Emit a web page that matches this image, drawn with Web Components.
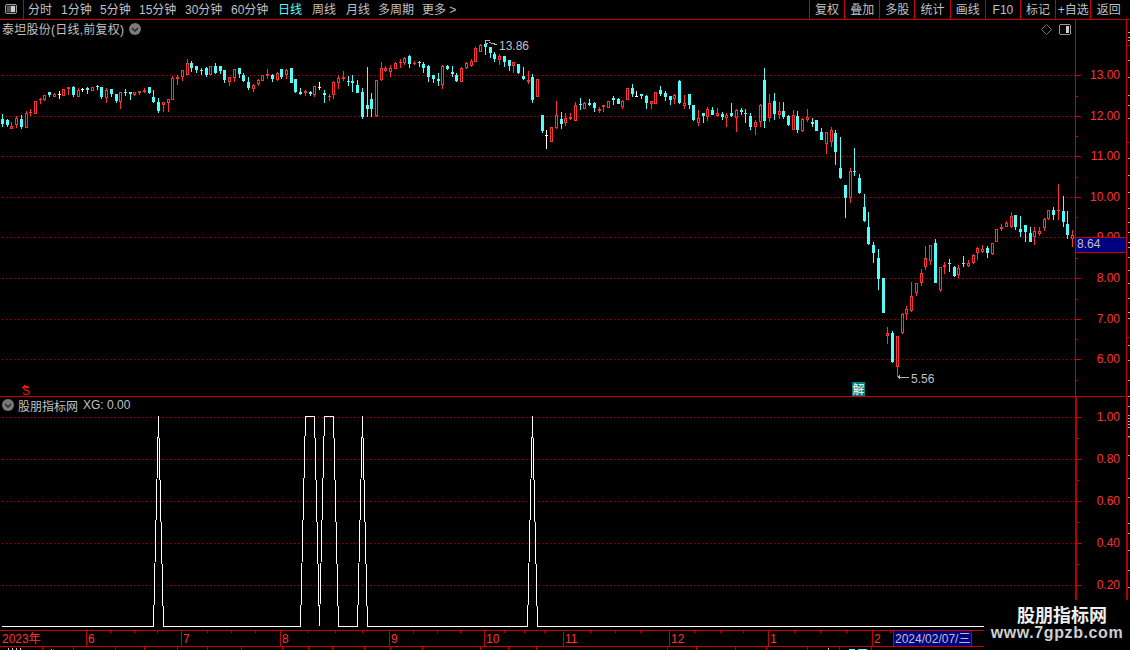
<!DOCTYPE html>
<html lang="zh">
<head>
<meta charset="utf-8">
<title>泰坦股份</title>
<style>
  html, body { margin: 0; background: #000; }
  body { width: 1130px; height: 650px; overflow: hidden; }
</style>
</head>
<body>
<stock-app>
  <stock-toolbar></stock-toolbar>
  <kline-panel></kline-panel>
  <indicator-panel></indicator-panel>
  <date-axis></date-axis>
  <status-strip></status-strip>
  <site-mark></site-mark>
</stock-app>

<script>
const RED = '#ff3232', LINE = '#c80000', CYAN = '#54fcfc', GRAY = '#c0c0c0';
const FONT = `"Liberation Sans", "Noto Sans CJK SC", sans-serif`;

// small helpers to write svg markup
const vline = (x, y1, y2, c = LINE, w = 1) => `<rect x="${x}" y="${y1}" width="${w}" height="${y2 - y1}" fill="${c}"/>`;
const hline = (x1, x2, y, c = LINE) => `<rect x="${x1}" y="${y}" width="${x2 - x1}" height="1" fill="${c}"/>`;
const label = (x, y, t, c = RED, anchor = 'start') => `<text x="${x}" y="${y}" fill="${c}" text-anchor="${anchor}">${t}</text>`;
// dotted grid line: one pixel on, three off (a dash array aliases under crispEdges)
const dots = (x2, y) => {
  let d = '';
  for (let x = 2; x < x2; x += 4) d += `M${x} ${y}h1v1h-1z`;
  return `<path d="${d}" fill="#b40000"/>`;
};
const chevron = (cx, cy) => `<circle cx="${cx}" cy="${cy}" r="6" fill="#7a7a7a"/><path d="M${cx - 3} ${cy - 1}l3 3 3-3" fill="none" stroke="#222" stroke-width="1.4"/>`;

class StockApp extends HTMLElement {
  constructor() {
    super();
    this.attachShadow({ mode: 'open' }).innerHTML = `
      <style>
        :host { display: flex; flex-direction: column; position: relative; width: 1130px; height: 650px; overflow: hidden; background: #000; font-family: ${FONT}; }
      </style>
      <slot></slot>`;
  }
}

class StockToolbar extends HTMLElement {
  constructor() {
    super();
    const periods = [['分时', 33], ['1分钟', 39], ['5分钟', 39], ['15分钟', 46], ['30分钟', 46], ['60分钟', 47], ['日线', 34, 'on'], ['周线', 34], ['月线', 32], ['多周期', 44], ['更多 &gt;', 40]];
    const tools = ['复权', '叠加', '多股', '统计', '画线', 'F10', '标记', '+自选', '返回'];
    this.attachShadow({ mode: 'open' }).innerHTML = `
      <style>
        :host { display: flex; box-sizing: border-box; height: 20px; border-bottom: 1px solid ${LINE}; color: ${GRAY}; font-size: 12px; line-height: 21px; white-space: nowrap; }
        .toggle { width: 23px; border-right: 1px solid ${LINE}; display: flex; align-items: center; justify-content: center; margin-right: 4px; }
        .periods { display: flex; flex: 1; }
        .periods span { display: block; }
        .on { color: ${CYAN}; }
        .tools { display: flex; }
        .tools span { width: 34.2px; border-left: 1px solid ${LINE}; text-align: center; }
        .tools span:last-child { width: 39.6px; padding-right: 4px; box-sizing: border-box; }
      </style>
      <div class="toggle">
        <svg width="13" height="11" viewBox="0 0 13 11" shape-rendering="crispEdges">
          <rect x=".5" y=".5" width="11" height="9" rx="2" fill="#222" stroke="#999"/>
          <rect x="2" y="2" width="4" height="6" fill="#555"/><rect x="6" y="2" width="4" height="6" fill="#ccc"/>
        </svg>
      </div>
      <div class="periods">${periods.map(([t, w, c]) => `<span class="${c || ''}" style="width:${w}px">${t}</span>`).join('')}</div>
      <div class="tools">${tools.map(t => `<span>${t}</span>`).join('')}</div>`;
  }
}

// candles read off the reference: [x, type, wickTop, wickBottom, bodyTop, bodyBottom] in 3x crop pixels
const SECTIONS = [
  { ox: 0, oy: 50, rows: [
    [7,'c',193,230,207,222],[22,'c',207,232,210,226],[34,'r',216,238,228,236],[49,'r',198,235,205,224],[64,'c',195,236,207,232],
    [79,'r',184,234,190,234],[91,'r',178,198,186,190],[106,'r',154,191,154,191],[121,'r',145,161,147,149],[133,'r',135,152,136,149],
    [148,'c',126,140,126,135],[163,'r',130,141,132,140],[178,'w',124,147,133,134],[190,'r',118,137,118,137],[205,'r',112,135,112,117],
    [220,'c',108,140,111,135],[235,'r',114,140,121,140],[247,'w',114,125,118,119],[262,'c',111,131,114,120],[277,'r',111,122,111,122],
    [292,'c',105,119,109,111],[304,'c',111,147,111,141],[319,'r',114,159,120,143],[334,'c',117,141,117,131],[349,'c',132,159,132,153],
    [361,'r',126,177,126,155],[376,'c',117,137,127,129],[391,'c',126,150,126,131],[403,'r',125,137,126,134],[418,'r',123,134,123,128],
    [433,'r',114,128,120,126],[448,'c',111,131,111,128],[460,'c',120,159,141,156],[475,'c',144,189,156,183],[490,'r',156,186,156,166],
    [505,'r',147,186,147,158],[517,'r',78,150,84,149],[532,'r',75,105,81,87],[547,'r',60,93,60,80],[562,'r',27,76,39,74],
    [574,'c',33,66,39,54],[589,'c',48,69,48,60],[604,'c',54,76,60,62],[619,'c',51,81,54,75],[631,'r',48,75,48,75],
    [646,'c',39,72,48,69],[661,'c',48,72,48,63],[673,'c',60,99,60,90],[688,'r',81,108,81,95],[703,'r',57,96,57,84]
  ] },
  { ox: 0, oy: 0, rows: [
    [718,'c',204,235,204,222],[730,'c',220,245,226,243],[745,'c',232,270,246,265],[760,'r',252,276,256,268],[775,'r',238,258,241,253],
    [787,'r',225,243,225,243],[802,'r',208,238,222,227],[817,'c',222,245,226,238],[832,'r',216,243,220,240],[845,'c',208,238,208,232],
    [860,'r',208,238,211,226],[874,'c',204,250,204,248],[887,'c',238,280,238,276],[902,'c',265,285,277,283],[917,'r',270,288,272,278],
    [932,'c',272,288,275,283],[944,'r',258,290,259,285],[958,'w',246,270,262,263],[973,'c',270,310,280,284],[988,'r',282,302,288,290],
    [1000,'r',243,298,247,285],[1015,'r',224,268,235,248],[1030,'r',213,243,231,238],[1045,'c',228,258,243,245],[1057,'c',225,275,242,248],
    [1072,'c',240,280,255,280],[1087,'c',265,358,276,352],[1102,'c',202,350,316,326],[1114,'c',280,350,297,326],[1129,'r',240,350,240,347],
    [1144,'r',186,243,205,240],[1157,'r',198,215,203,212],[1172,'r',195,230,205,215],[1187,'r',186,208,190,206],[1202,'r',178,205,185,190],
    [1214,'r',170,195,175,190],[1229,'c',165,204,168,192],[1244,'r',182,195,190,193],[1259,'c',182,200,186,190],[1271,'c',186,218,192,204],
    [1286,'c',196,245,198,230],[1301,'c',225,250,225,238],[1316,'c',220,258,238,243],[1328,'r',196,268,198,255],[1343,'c',195,210,198,206],
    [1358,'c',198,232,215,222],[1370,'c',218,246,226,244],[1385,'r',200,246,203,245],[1400,'r',186,208,190,205],[1415,'r',178,200,182,197],
    [1427,'r',140,185,145,185]
  ] },
  { ox: 240, oy: 35, rows: [
    [722,'r',28,52,30,52],[737,'c',15,60,27,37],[751,'c',35,68,37,55],[764,'c',52,82,57,72],[778,'r',58,90,63,74],
    [793,'c',62,95,62,80],[808,'c',75,108,75,92],[820,'r',80,115,82,92],[835,'c',87,118,87,115],[850,'c',96,135,123,132],
    [865,'r',107,147,135,142],[878,'c',118,205,126,195]
  ] },
  { ox: 480, oy: 30, rows: [
    [172,'r',148,200,148,200],[187,'c',255,308,255,303],[199,'w',300,357,316,317],[214,'r',292,336,292,336],[229,'r',213,296,256,294],
    [244,'c',247,297,268,283],[257,'r',250,288,264,278],[271,'r',248,270,262,267],[286,'r',217,273,226,272],[301,'c',205,240,222,224],
    [313,'r',217,238,218,236],[328,'c',208,228,220,225],[343,'c',215,246,219,234],[358,'r',232,250,237,243],[370,'r',225,246,226,232],
    [385,'r',214,234,214,234],[400,'c',198,225,204,210],[415,'c',205,222,207,221],[427,'r',209,236,213,231],[442,'r',175,210,175,210],
    [457,'c',163,200,175,191],[469,'w',184,200,198,199],[484,'c',192,207,192,197],[499,'c',195,236,198,219],[514,'r',214,236,214,221],
    [526,'r',185,222,186,221],[541,'c',168,198,180,192],[556,'c',183,213,189,201],[571,'c',197,225,198,211],[583,'r',193,222,196,208],
    [598,'c',150,222,153,219],[613,'r',195,236,218,227],[628,'c',192,236,192,226],[640,'c',225,272,226,270],[655,'r',240,288,264,278],
    [670,'c',248,278,250,257],[683,'r',230,272,238,262],[697,'c',232,255,239,254],[712,'r',235,260,250,257],[727,'c',245,270,252,262],
    [739,'r',250,292,255,265],[754,'c',220,262,249,258],[769,'r',238,305,240,265],[784,'c',234,256,240,246],[796,'c',238,278,249,251],
    [811,'c',250,300,258,290],[826,'r',270,315,276,290],[841,'r',222,290,226,275],[854,'c',114,295,150,272],[868,'r',192,275,219,265],
    [883,'c',190,270,213,252],[898,'r',215,268,244,256],[910,'c',216,268,243,262],[925,'c',254,288,258,285],[940,'r',240,300,256,299],
    [952,'c',243,308,259,300],[967,'r',264,305,268,304],[982,'r',238,275,262,270],[997,'c',264,292,277,283],[1009,'c',270,303,270,303],
    [1024,'c',294,330,306,330],[1039,'r',306,372,306,343],[1054,'r',290,350,300,335]
  ] },
  { ox: 820, oy: 130, rows: [
    [46,'c',0,105,10,65],[61,'c',20,147,114,145],[76,'c',165,263,165,204],[91,'r',115,218,124,205],[103,'c',55,137,122,125],
    [118,'c',132,192,144,190],[133,'c',192,275,231,273],[145,'c',245,345,291,342],[160,'c',335,398,345,368],[175,'c',357,480,384,446],
    [190,'c',445,548,445,548],[202,'r',592,642,610,617],[217,'c',603,698,608,695],[232,'r',618,740,618,712],[247,'r',550,612,552,610],
    [259,'r',528,570,538,552],[274,'r',456,545,498,542],[289,'r',460,498,460,488],[304,'r',418,468,430,458],[316,'r',348,420,385,410],
    [331,'r',345,405,346,392],[346,'c',328,458,340,458],[361,'r',410,486,412,480],[373,'r',395,432,405,412],[388,'c',388,425,399,401],
    [403,'c',408,440,411,438],[415,'r',405,445,415,434],[430,'c',378,412,399,402],[445,'r',390,410,399,407],[460,'r',372,402,376,398],
    [472,'r',352,390,354,370],[487,'r',345,368,357,365],[502,'c',348,384,354,368],[517,'r',339,374,340,372],[529,'r',296,335,298,335],
    [544,'r',283,302,290,298],[559,'r',274,292,278,290],[574,'r',246,295,259,292],[586,'c',255,300,255,290],[601,'c',258,320,296,305],
    [616,'c',285,335,286,305],[631,'c',292,335,310,335],[643,'r',292,345,304,322],[658,'r',292,318,304,312],[673,'r',265,302,268,293],
    [685,'r',240,270,241,268],[700,'c',232,270,240,255],[715,'r',162,270,240,242],[730,'c',198,290,243,276],[742,'c',243,326,282,315],
    [757,'r',300,352,316,328]
  ] }
];

function candleMarkup() {
  let out = '';
  for (const { ox, oy, rows } of SECTIONS) {
    for (const [px, kind, wt, wb, bt, bb] of rows) {
      const x = Math.round(ox + px / 3 - .5);
      const [wickTop, wickBot] = [wt, wb].map(v => Math.round(oy + v / 3));
      const top = Math.round(oy + bt / 3);
      const h = Math.max(Math.round(oy + bb / 3) - top, 1);
      if (kind === 'w') {
        out += vline(x, wickTop, wickBot, '#fff') + hline(x - 1, x + 2, top, '#fff');
      } else if (kind === 'c') {
        out += vline(x, wickTop, wickBot, CYAN) + `<rect x="${x - 1}" y="${top}" width="3" height="${h}" fill="${CYAN}"/>`;
      } else {
        out += vline(x, wickTop, wickBot, RED) + `<rect x="${x - 1}" y="${top}" width="3" height="${h}" fill="${RED}"/>`;
        if (h > 2) out += `<rect x="${x}" y="${top + 1}" width="1" height="${h - 2}" fill="#000"/>`;
      }
    }
  }
  return out;
}

class KlinePanel extends HTMLElement {
  constructor() {
    super();
    const grid = [75, 116, 156, 197, 237, 278, 319, 359];
    const prices = ['13.00', '12.00', '11.00', '10.00', '9.00', '8.00', '7.00', '6.00'];
    const rightTicks = [32, 37, 40, 60, 77, 95, 105, 118, 158, 175, 192, 208, 222, 232, 242, 247, 257, 270, 283, 298, 312, 318, 345, 360, 380, 396];
    this.attachShadow({ mode: 'open' }).innerHTML = `
      <style>
        :host { display: flex; box-sizing: border-box; height: 377px; border-bottom: 1px solid ${LINE}; font: 12px ${FONT}; }
        .plot { display: grid; width: 1075px; height: 376px; }
        .plot > * { grid-area: 1 / 1; }
        .title { display: flex; align-items: center; justify-content: space-between; align-self: start; height: 17px; padding: 0 3px 0 2px; color: ${GRAY}; z-index: 1; white-space: nowrap; }
        .title div { display: flex; align-items: center; gap: 5px; }
        .name { letter-spacing: .25px; }
        .icons { gap: 7px !important; margin-top: 2px; }
        svg { display: block; overflow: visible; }
        svg text { font: 12px ${FONT}; }
      </style>
      <div class="plot">
        <svg width="1075" height="376" viewBox="0 20 1075 376" shape-rendering="crispEdges">
          ${grid.map(y => dots(1075, y)).join('')}
          ${candleMarkup()}
          <path d="M485.5 46V40.500H490M485 43.500H488M489 42l3 1.500 5 1" fill="none" stroke="#b4b4b4"/>
          ${label(499, 50, '13.86', GRAY)}
          ${hline(898, 909, 377, '#b4b4b4')}
          <path d="M897 377l3-2v5z" fill="#b4b4b4"/>
          ${label(911, 383, '5.56', GRAY)}
          <path d="M25 384l3 4h-6z" fill="#ff1010"/>
          <text x="22" y="395" fill="#ff1010" style="font:bold 9px ${FONT}">S</text>
          <rect x="852" y="382" width="13" height="14" fill="#008080"/>
          <text x="852.500" y="394" fill="#fff">解</text>
        </svg>
        <div class="title">
          <div><span class="name">泰坦股份(日线,前复权)</span>
            <svg width="12" height="12" viewBox="128 23 12 12">${chevron(134, 29)}</svg>
          </div>
          <div class="icons">
            <svg width="11" height="11" viewBox="0 0 11 11"><path d="M5.500.5l5 5-5 5-5-5z" fill="none" stroke="#777"/></svg>
            <svg width="13" height="12" viewBox="0 0 13 12" shape-rendering="crispEdges">
              <rect x=".5" y=".5" width="11" height="10" rx="2" fill="#000" stroke="#999"/>
              <rect x="7" y="2" width="3" height="7" fill="#ccc"/>
            </svg>
          </div>
        </div>
      </div>
      <svg width="55" height="376" viewBox="1075 20 55 376" shape-rendering="crispEdges">
        ${vline(1075, 20, 396)}${vline(1126, 20, 396)}
        ${grid.map((y, i) => hline(1075, 1081, y) + label(1120, y + 4, prices[i], RED, 'end')).join('')}
        ${grid.slice(0, -1).map((y, i) => hline(1075, 1078, Math.round((y + grid[i + 1]) / 2))).join('')}
        ${hline(1075, 1078, 339)}${hline(1075, 1078, 380)}
        ${rightTicks.map(y => hline(1128, 1130, y, '#aaa')).join('')}
        ${hline(1126, 1130, 45)}${hline(1126, 1130, 142)}${hline(1126, 1130, 337)}
        <rect x="1076" y="237" width="50" height="15" fill="#000080"/>
        ${hline(1075, 1127, 237)}${hline(1075, 1127, 252)}
        ${label(1077, 248, '8.64', GRAY)}
      </svg>`;
  }
}

class IndicatorPanel extends HTMLElement {
  constructor() {
    super();
    const levels = [[417, '1.00'], [459, '0.80'], [501, '0.60'], [543, '0.40'], [585, '0.20']];
    const ticks = [406, 415, 418, 421, 424, 427, 436, 455, 478, 497, 523, 533, 550, 570, 587, 600];
    const pts = [[2, 626], [153.5, 626], [158.5, 416], [163.5, 626], [300.5, 626], [305.5, 416], [314.5, 416], [319.5, 626], [324.5, 416], [333.5, 416], [338.5, 626], [357.5, 626], [362.5, 416], [367.5, 626], [527.5, 626], [532.5, 416], [537.5, 626], [1075, 626]];
    this.attachShadow({ mode: 'open' }).innerHTML = `
      <style>
        :host { display: flex; height: 233px; font: 12px ${FONT}; }
        .plot { display: grid; width: 1075px; }
        .plot > * { grid-area: 1 / 1; }
        .title { display: flex; align-items: center; gap: 4px; align-self: start; height: 16px; padding-left: 2px; color: ${GRAY}; white-space: nowrap; }
        .title b { font-weight: normal; margin-left: 1px; }
        svg { display: block; }
        svg text { font: 12px ${FONT}; }
      </style>
      <div class="plot">
        <svg width="1075" height="233" viewBox="0 397 1075 233" shape-rendering="crispEdges">
          ${levels.map(([y]) => dots(1075, y)).join('')}
          <polyline points="${pts.map(p => p.join(',')).join(' ')}" fill="none" stroke="#fff"/>
        </svg>
        <div class="title">
          <svg width="12" height="12" viewBox="0 0 12 12">${chevron(6, 6)}</svg>
          <span>股朋指标网</span><b>XG: 0.00</b>
        </div>
      </div>
      <svg width="55" height="233" viewBox="1075 397 55 233" shape-rendering="crispEdges">
        ${vline(1075, 397, 630, '#b00000', 2)}${vline(1126, 397, 630, '#b00000', 2)}
        ${levels.map(([y, t]) => hline(1075, 1081, y) + label(1120, y + 4, t, RED, 'end')).join('')}
        ${[438, 480, 522, 564].map(y => hline(1077, 1079, y)).join('')}
        ${ticks.map(y => hline(1128, 1130, y, '#aaa')).join('')}
        ${hline(1128, 1130, 437)}
      </svg>`;
  }
}

class DateAxis extends HTMLElement {
  constructor() {
    super();
    const months = [[86, '6'], [181, '7'], [280, '8'], [389, '9'], [484, '10'], [563, '11'], [669, '12'], [768, '1'], [872, '2']];
    const minor = [110, 134, 157, 207, 231, 255, 307, 335, 362, 413, 437, 460, 504, 524, 544, 590, 615, 640, 694, 720, 743, 794, 820, 846, 890];
    this.attachShadow({ mode: 'open' }).innerHTML = `
      <style>
        :host { display: block; height: 17px; }
        svg { display: block; }
        svg text { font: 12px ${FONT}; }
      </style>
      <svg width="1130" height="17" viewBox="0 630 1130 17" shape-rendering="crispEdges">
        ${hline(0, 1130, 630)}${hline(0, 1130, 646)}
        ${label(2, 643, '2023年')}
        ${months.map(([x, t]) => vline(x, 630, 646) + label(x + 2, 643, t)).join('')}
        ${minor.map(x => vline(x, 630, 633)).join('')}
        <rect x="893" y="631" width="79" height="15" fill="#000080"/>
        ${vline(893, 630, 646)}${vline(971, 630, 646)}
        ${label(895, 642.500, '2024/02/07/三', GRAY)}
      </svg>`;
  }
}

// the screenshot cuts this row off: only the separators and the tops of its glyphs show
class StatusStrip extends HTMLElement {
  constructor() {
    super();
    const seps = [42, 73, 115, 144, 177, 207, 241, 282, 308, 332, 364, 390, 422, 480, 508, 536, 667, 696, 735, 766, 807, 839, 871];
    this.attachShadow({ mode: 'open' }).innerHTML = `
      <style>
        :host { display: block; height: 3px; }
        svg { display: block; }
      </style>
      <svg width="1130" height="3" viewBox="0 647 1130 3" shape-rendering="crispEdges">
        ${seps.map(x => vline(x, 647, 650)).join('')}
        ${[8, 12, 16, 20].map(x => vline(x, 648, 650, '#ccc')).join('')}
        ${vline(51, 649, 650, '#ccc')}${vline(828, 648, 650, '#ccc')}
        <rect x="849" y="649" width="6" height="1" fill="${CYAN}"/><rect x="858" y="649" width="9" height="1" fill="${CYAN}"/>
      </svg>`;
  }
}

class SiteMark extends HTMLElement {
  constructor() {
    super();
    this.attachShadow({ mode: 'open' }).innerHTML = `
      <style>
        :host { position: absolute; right: 0; bottom: 0; width: 146px; height: 50px; background: #000; display: flex; flex-direction: column; align-items: center; white-space: nowrap; }
        .name { font: bold 18px/18px "Noto Sans CJK SC", sans-serif; margin: 5px 0 1px 10px; color: #eee; }
        .url { font: bold 16px/18px ${FONT}; letter-spacing: .6px; color: #cfcfcf; }
      </style>
      <div class="name">股朋指标网</div>
      <div class="url">www.7gpzb.com</div>`;
  }
}

customElements.define('stock-app', StockApp);
customElements.define('stock-toolbar', StockToolbar);
customElements.define('kline-panel', KlinePanel);
customElements.define('indicator-panel', IndicatorPanel);
customElements.define('date-axis', DateAxis);
customElements.define('status-strip', StatusStrip);
customElements.define('site-mark', SiteMark);
</script>
</body>
</html>
